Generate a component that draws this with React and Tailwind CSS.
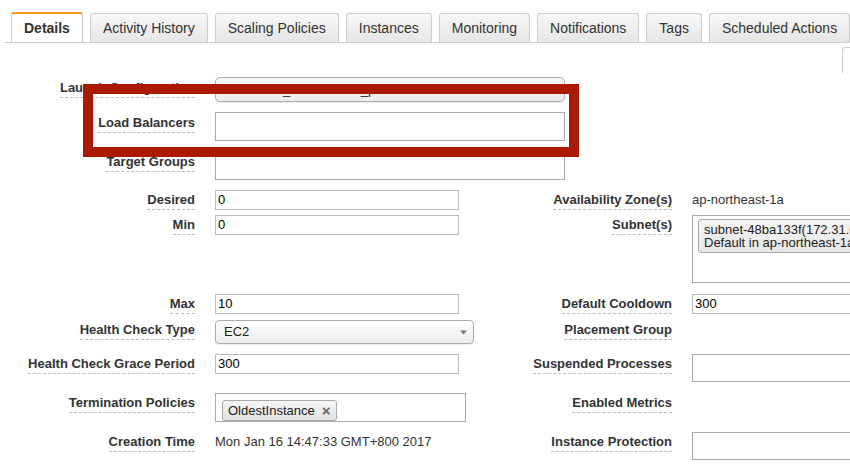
function Tab({ children, active }) {
  if (active) {
    return (
      <div className="-mb-px flex h-[31px] shrink-0 items-center whitespace-nowrap rounded-t-[3px] border-x border-t-2 border-x-[#ccc] border-t-[#f7931e] bg-white px-[12px] text-[14px] font-bold text-[#333]">
        {children}
      </div>
    );
  }
  return (
    <div className="flex h-[29px] shrink-0 items-center whitespace-nowrap rounded-t-[3px] border-x border-t border-[#ccc] bg-linear-to-b from-[#f7f7f7] to-[#e6e6e6] px-[12px] text-[14px] text-[#333]">
      {children}
    </div>
  );
}

function Label({ children, top }) {
  return (
    <div className="flex justify-end">
      <span
        className={
          top === 3
            ? "mt-[3px] whitespace-nowrap border-b border-dashed border-[#bbb] pb-[1px] text-[13px] font-bold leading-[16px] text-[#333]"
            : "mt-[2px] whitespace-nowrap border-b border-dashed border-[#bbb] pb-[1px] text-[13px] font-bold leading-[16px] text-[#333]"
        }
      >
        {children}
      </span>
    </div>
  );
}

function SmallInput({ value, wide }) {
  return (
    <div
      className={
        wide
          ? "h-[20px] w-[200px] border border-[#bbb] px-[2px] text-[13px] leading-[18px] text-black"
          : "h-[20px] w-[244px] border border-[#bbb] px-[2px] text-[13px] leading-[18px] text-black"
      }
    >
      {value}
    </div>
  );
}

function Box({ h }) {
  return <div className={`${h} w-[200px] border border-[#aaa] bg-white`} />;
}

function Text({ children }) {
  return <div className="mt-[2px] whitespace-nowrap text-[13px] leading-[16px] text-[#333]">{children}</div>;
}

function Row({ h, children }) {
  return (
    <div className={`grid grid-cols-[195px_260px_177px_1fr] items-start gap-x-[20px] ${h}`}>
      {children}
    </div>
  );
}

export default function App() {
  return (
    <div className="relative h-[476px] w-[850px] overflow-hidden bg-white font-['Liberation_Sans',Arial,sans-serif]">
      {/* tabs */}
      <div className="ml-[4px] flex items-end gap-[7px] overflow-hidden border-b border-[#ccc] pl-[7px] pt-[12px]">
        <Tab active>Details</Tab>
        <Tab>Activity History</Tab>
        <Tab>Scaling Policies</Tab>
        <Tab>Instances</Tab>
        <Tab>Monitoring</Tab>
        <Tab>Notifications</Tab>
        <Tab>Tags</Tab>
        <Tab>Scheduled Actions</Tab>
      </div>

      <div className="flex h-[34px] justify-end pt-[4px]">
        <div className="h-[26px] w-[8px] rounded-tl-[3px] border-l border-t border-[#ccc]" />
      </div>

      {/* form */}
      <Row h="h-[35px]">
        <Label top={3}>Launch Configuration</Label>
        <div className="col-span-3">
          <div className="flex h-[25px] w-[350px] items-center overflow-hidden rounded-[5px] border border-[#aaa] bg-linear-to-b from-[#f8f8f8] to-[#ececec] pl-[7px] text-[13px] text-[#222] shadow-[0_1px_1px_rgba(0,0,0,0.08)]">
            webserver_lc-20170116_prod
          </div>
        </div>
      </Row>
      <Row h="h-[39px]">
        <Label top={3}>Load Balancers</Label>
        <div className="col-span-3">
          <div className="h-[29px] w-[350px] border border-[#aaa] bg-white" />
        </div>
      </Row>
      <Row h="h-[39px]">
        <Label top={3}>Target Groups</Label>
        <div className="col-span-3">
          <div className="h-[29px] w-[350px] border border-[#aaa] bg-white" />
        </div>
      </Row>
      <Row h="h-[25px]">
        <Label>Desired</Label>
        <SmallInput value="0" />
        <Label>Availability Zone(s)</Label>
        <Text>ap-northeast-1a</Text>
      </Row>
      <Row h="h-[79px]">
        <Label>Min</Label>
        <SmallInput value="0" />
        <Label>Subnet(s)</Label>
        <div className="h-[68px] w-[200px] overflow-hidden border border-[#aaa] bg-white pl-[5px] pt-[3px]">
          <div className="w-[200px] whitespace-nowrap rounded-[3px] border border-[#aaa] bg-linear-to-b from-[#f6f6f6] to-[#e6e6e6] py-[3px] pl-[5px] text-[13px] leading-[13px] text-[#222]">
            <div>subnet-48ba133f(172.31.0.0/20)</div>
            <div>Default in ap-northeast-1a</div>
          </div>
        </div>
      </Row>
      <Row h="h-[26px]">
        <Label>Max</Label>
        <SmallInput value="10" />
        <Label>Default Cooldown</Label>
        <SmallInput value="300" wide />
      </Row>
      <Row h="h-[34px]">
        <Label>Health Check Type</Label>
        <div className="flex h-[24px] w-[259px] items-center rounded-[4px] border border-[#aaa] bg-linear-to-b from-white to-[#ececec] pl-[8px] pr-[6px] text-[13px] text-[#222] shadow-[0_1px_1px_rgba(0,0,0,0.08)]">
          EC2
          <svg className="ml-auto" width="7" height="5" viewBox="0 0 7 5">
            <path d="M0 0.5 L7 0.5 L3.5 4.5 Z" fill="#777" />
          </svg>
        </div>
        <Label>Placement Group</Label>
        <div />
      </Row>
      <Row h="h-[39px]">
        <Label>Health Check Grace Period</Label>
        <SmallInput value="300" />
        <Label>Suspended Processes</Label>
        <Box h="h-[28px]" />
      </Row>
      <Row h="h-[39px]">
        <Label>Termination Policies</Label>
        <div className="h-[29px] w-[251px] border border-[#aaa] bg-white pl-[6px] pt-[4px]">
          <div className="inline-flex h-[21px] items-center rounded-[3px] border border-[#aaa] bg-linear-to-b from-[#f6f6f6] to-[#e2e2e2] pl-[5px] pr-[6px] text-[13px] text-[#222]">
            OldestInstance
            <span className="ml-[7px] text-[15px] font-bold leading-none text-[#666]">×</span>
          </div>
        </div>
        <Label>Enabled Metrics</Label>
        <div />
      </Row>
      <Row h="h-[44px]">
        <Label>Creation Time</Label>
        <Text>Mon Jan 16 14:47:33 GMT+800 2017</Text>
        <Label>Instance Protection</Label>
        <Box h="h-[28px]" />
      </Row>

      {/* highlight */}
      <div className="absolute left-[83px] top-[84px] h-[73px] w-[496px] border-[10px] border-[#a91a00]" />
    </div>
  );
}
